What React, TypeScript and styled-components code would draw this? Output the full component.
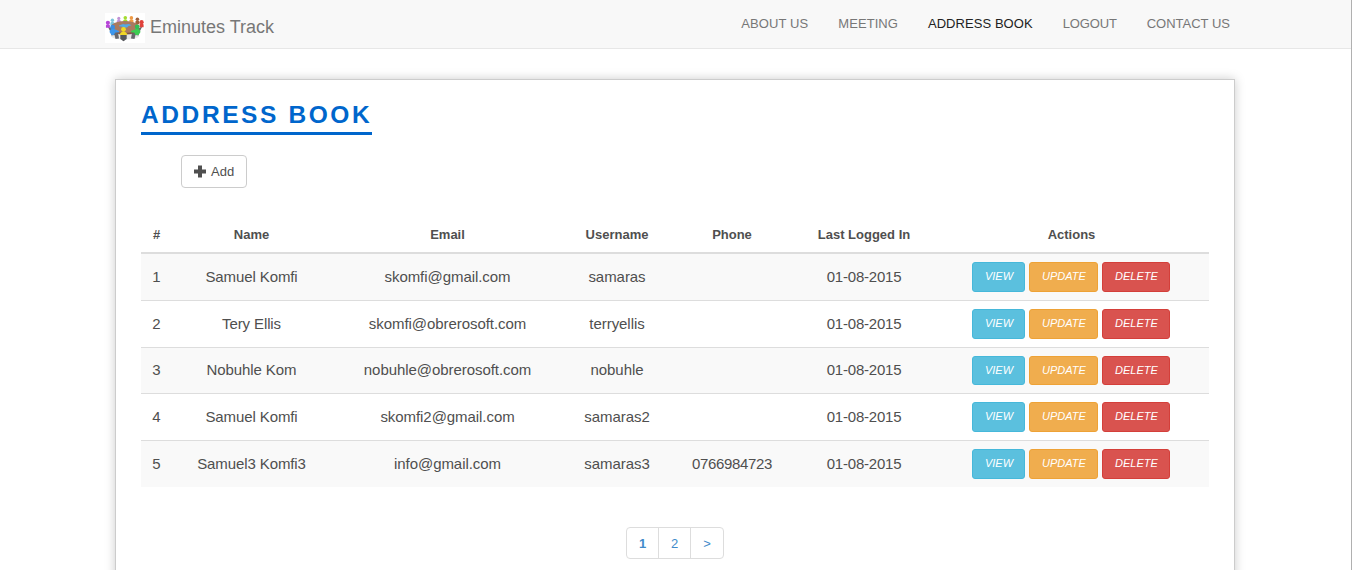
import React from "react";
import styled, { createGlobalStyle } from "styled-components";

const GlobalStyle = createGlobalStyle`
  * { box-sizing: border-box; }
  html, body { margin: 0; padding: 0; height: 570px; overflow: hidden; }
  body {
    background: #fff;
    color: #4f4f4f;
    font: 15px/1.43 "Liberation Sans", Arial, sans-serif;
  }
`;

const Page = styled.div`
  height: 570px;
  overflow: hidden;
  border-right: 1px solid #b0b0b0;
`;

const Navbar = styled.header`
  display: flex;
  justify-content: space-between;
  height: 49px;
  padding: 0 106px 0 105px;
  background: #f8f8f8;
  border-bottom: 1px solid #e7e7e7;
`;

const Brand = styled.a`
  display: flex;
  gap: 5px;
  padding-top: 13px;
  color: #777;
  font-size: 18px;
  line-height: 28px;
`;

const Menu = styled.nav`
  display: flex;
`;

const MenuLink = styled.a<{ $active?: boolean; $tracking?: number }>`
  padding: 14px 15px 0;
  color: ${(p) => (p.$active ? "#222" : "#777")};
  font-size: 13px;
  line-height: 20px;
  letter-spacing: ${(p) => p.$tracking ?? 0}px;
  text-transform: uppercase;
  white-space: nowrap;
`;

const Panel = styled.main`
  width: 1120px;
  height: 600px;
  margin: 30px 0 0 115px;
  padding: 20px 25px;
  background: #fff;
  border: 1px solid #ccc;
  box-shadow: 0 0 10px #ccc;
`;

const Title = styled.h1`
  width: 231px;
  height: 35px;
  margin: 0;
  color: #06c;
  border-bottom: 3px solid #06c;
  font-size: 24.5px;
  line-height: 30px;
  letter-spacing: 2.6px;
  white-space: nowrap;
  text-transform: uppercase;
`;

const AddButton = styled.button`
  display: flex;
  align-items: center;
  gap: 4px;
  height: 33px;
  margin: 20px 0 0 40px;
  padding: 0 12px;
  color: #4f4f4f;
  background: #fff;
  border: 1px solid #ccc;
  border-radius: 4px;
  font: 13px/20px "Liberation Sans", Arial, sans-serif;
`;

const Table = styled.table`
  width: 1068px;
  margin-top: 28px;
  table-layout: fixed;
  border-spacing: 0;
  text-align: center;
`;

const HeadCell = styled.th<{ $width: number }>`
  width: ${(p) => p.$width}px;
  height: 38px;
  padding: 2px 0 0;
  border-bottom: 2px solid #ddd;
  font-size: 13px;
  line-height: 20px;
  vertical-align: middle;
`;

const Cell = styled.td<{ $tracking?: number }>`
  padding: 0;
  border-top: 1px solid #ddd;
  font-size: 15px;
  line-height: 20px;
  letter-spacing: ${(p) => p.$tracking ?? 0}px;
  vertical-align: middle;
  white-space: nowrap;
`;

const Actions = styled.div`
  display: flex;
  justify-content: center;
  gap: 4px;
  height: 30px;
  padding-right: 1px;
`;

const tones = {
  info: ["#5bc0de", "#46b8da"],
  warning: ["#f0ad4e", "#eea236"],
  danger: ["#d9534f", "#d43f3a"],
};

const ActionButton = styled.a<{ $tone: keyof typeof tones; $width: number }>`
  width: ${(p) => p.$width}px;
  height: 30px;
  padding-left: 1px;
  color: #fff;
  background: ${(p) => tones[p.$tone][0]};
  border: 1px solid ${(p) => tones[p.$tone][1]};
  border-radius: 3px;
  font-size: 11px;
  font-style: italic;
  line-height: 27px;
  text-transform: uppercase;
`;

const Row = styled.tr`
  height: 47px;
  &:nth-child(odd) { background: #f9f9f9; }
  &:nth-child(1), &:nth-child(3) { height: 46px; }
  &:first-child ${Cell} { border-top: 0; }
  &:nth-child(3) ${Cell} { padding-bottom: 1px; }
  &:nth-child(3) ${Actions}, &:nth-child(3) ${ActionButton} { height: 29px; }
`;

const Pager = styled.nav`
  display: flex;
  width: 98px;
  height: 32px;
  margin: 40px auto 0;
  border: 1px solid #ddd;
  border-radius: 4px;
`;

const PageLink = styled.a<{ $current?: boolean }>`
  flex: 0 0 32px;
  color: #428bca;
  font-size: 13px;
  font-weight: ${(p) => (p.$current ? 700 : 400)};
  line-height: 31px;
  text-align: center;
  &:first-child { flex-basis: 31px; }
  &:last-child { flex-basis: 33px; }
  & + & { border-left: 1px solid #ddd; }
`;

const attendees: [number, number, string, number][] = [
  [7.4, 7.3, "#7cc4dc", 1.7],
  [13.8, 5.4, "#c193d6", 1.6],
  [20.3, 4.8, "#a4dc30", 1.8],
  [26.4, 4.9, "#ee9a45", 1.8],
  [32.4, 6.2, "#a0603a", 1.8],
  [2.9, 9.8, "#b745d8", 2.1],
  [36.6, 9.2, "#e0403a", 2.1],
];

const Logo = () => (
  <svg width="40" height="30" viewBox="0 0 40 30">
    <rect width="40" height="30" fill="#fff" />
    <ellipse cx="20" cy="23" rx="14" ry="3.5" fill="#e6e6e6" />
    <path d="M2.5 13l3 6 1 3.5 3-.5 1 4 3.500-.500-1-6zM37.500 13l-3 6-1 3.500-3-.500-1 4-3.500-.500 1-6z" fill="#66676c" />
    {attendees.map(([x, y, fill, r]) => (
      <g key={x} fill={fill}>
        <circle cx={x} cy={y} r={r} />
        <path d={`M${x - 2} ${y + 5}v-2.6q2-2 4 0v2.6z`} />
      </g>
    ))}
    <ellipse cx="20" cy="15" rx="14" ry="6.6" fill="#7c5544" />
    <ellipse cx="20" cy="14" rx="14" ry="6" fill="#aa7a60" />
    <path d="M14 12.500l4-1.500 2 .500 4-.500 2.500 1.300-3 .700-1 1.300-3.500.700-1.500-1.300-3.500-.500z" fill="#55a9e2" />
    <circle cx="7.6" cy="14.2" r="2.4" fill="#3a8de2" />
    <path d="M4.500 19q1-4 4.500-3l5 2v1.200l-4 .500-1 2.300H6.500z" fill="#3c96ec" />
    <circle cx="32.2" cy="13.8" r="2.4" fill="#2fbf55" />
    <path d="M35.500 19q-1-4-4.500-3l-5 2v1.200l3.500.500 1 2.300h3z" fill="#3ccc52" />
    <path d="M15.300 20.500h6.400v5.500l-3.200 2.200-3.200-2.200z" fill="#55565c" />
    <circle cx="18.5" cy="16.3" r="2.4" fill="#f1d820" />
    <path d="M14.700 21q3.800-5.500 7.600 0v1h-7.600z" fill="#f0d628" />
  </svg>
);

const PlusIcon = () => (
  <svg width="13" height="13" viewBox="0 0 13 13">
    <path d="M4 .5h4v4h4v4H8v4H4v-4H0v-4h4z" fill="#4f4f4f" />
  </svg>
);

const columns: [string, number][] = [
  ["#", 31], ["Name", 159], ["Email", 233], ["Username", 106],
  ["Phone", 124], ["Last Logged In", 140], ["Actions", 275],
];

// Letter spacing of each text column, in the order of the columns above.
const cellTracking = [0, -0.1, -0.06, -0.05, -0.33, -0.22];

const contacts = [
  ["1", "Samuel Komfi", "skomfi@gmail.com", "samaras", "", "01-08-2015"],
  ["2", "Tery Ellis", "skomfi@obrerosoft.com", "terryellis", "", "01-08-2015"],
  ["3", "Nobuhle Kom", "nobuhle@obrerosoft.com", "nobuhle", "", "01-08-2015"],
  ["4", "Samuel Komfi", "skomfi2@gmail.com", "samaras2", "", "01-08-2015"],
  ["5", "Samuel3 Komfi3", "info@gmail.com", "samaras3", "0766984723", "01-08-2015"],
];

export default function App() {
  return (
    <Page>
      <GlobalStyle />
      <Navbar>
        <Brand><Logo />Eminutes Track</Brand>
        <Menu>
          <MenuLink $tracking={0.1}>About us</MenuLink>
          <MenuLink $tracking={0.06}>Meeting</MenuLink>
          <MenuLink $active $tracking={0.06}>Address book</MenuLink>
          <MenuLink $tracking={-0.15}>Logout</MenuLink>
          <MenuLink>Contact us</MenuLink>
        </Menu>
      </Navbar>
      <Panel>
        <Title>Address book</Title>
        <AddButton><PlusIcon />Add</AddButton>
        <Table>
          <thead>
            <tr>{columns.map(([name, width]) => <HeadCell key={name} $width={width}>{name}</HeadCell>)}</tr>
          </thead>
          <tbody>
            {contacts.map((contact) => (
              <Row key={contact[0]}>
                {contact.map((value, i) => <Cell key={i} $tracking={cellTracking[i]}>{value}</Cell>)}
                <Cell>
                  <Actions>
                    <ActionButton $tone="info" $width={53}>View</ActionButton>
                    <ActionButton $tone="warning" $width={69}>Update</ActionButton>
                    <ActionButton $tone="danger" $width={68}>Delete</ActionButton>
                  </Actions>
                </Cell>
              </Row>
            ))}
          </tbody>
        </Table>
        <Pager>
          <PageLink $current>1</PageLink>
          <PageLink>2</PageLink>
          <PageLink>&gt;</PageLink>
        </Pager>
      </Panel>
    </Page>
  );
}
